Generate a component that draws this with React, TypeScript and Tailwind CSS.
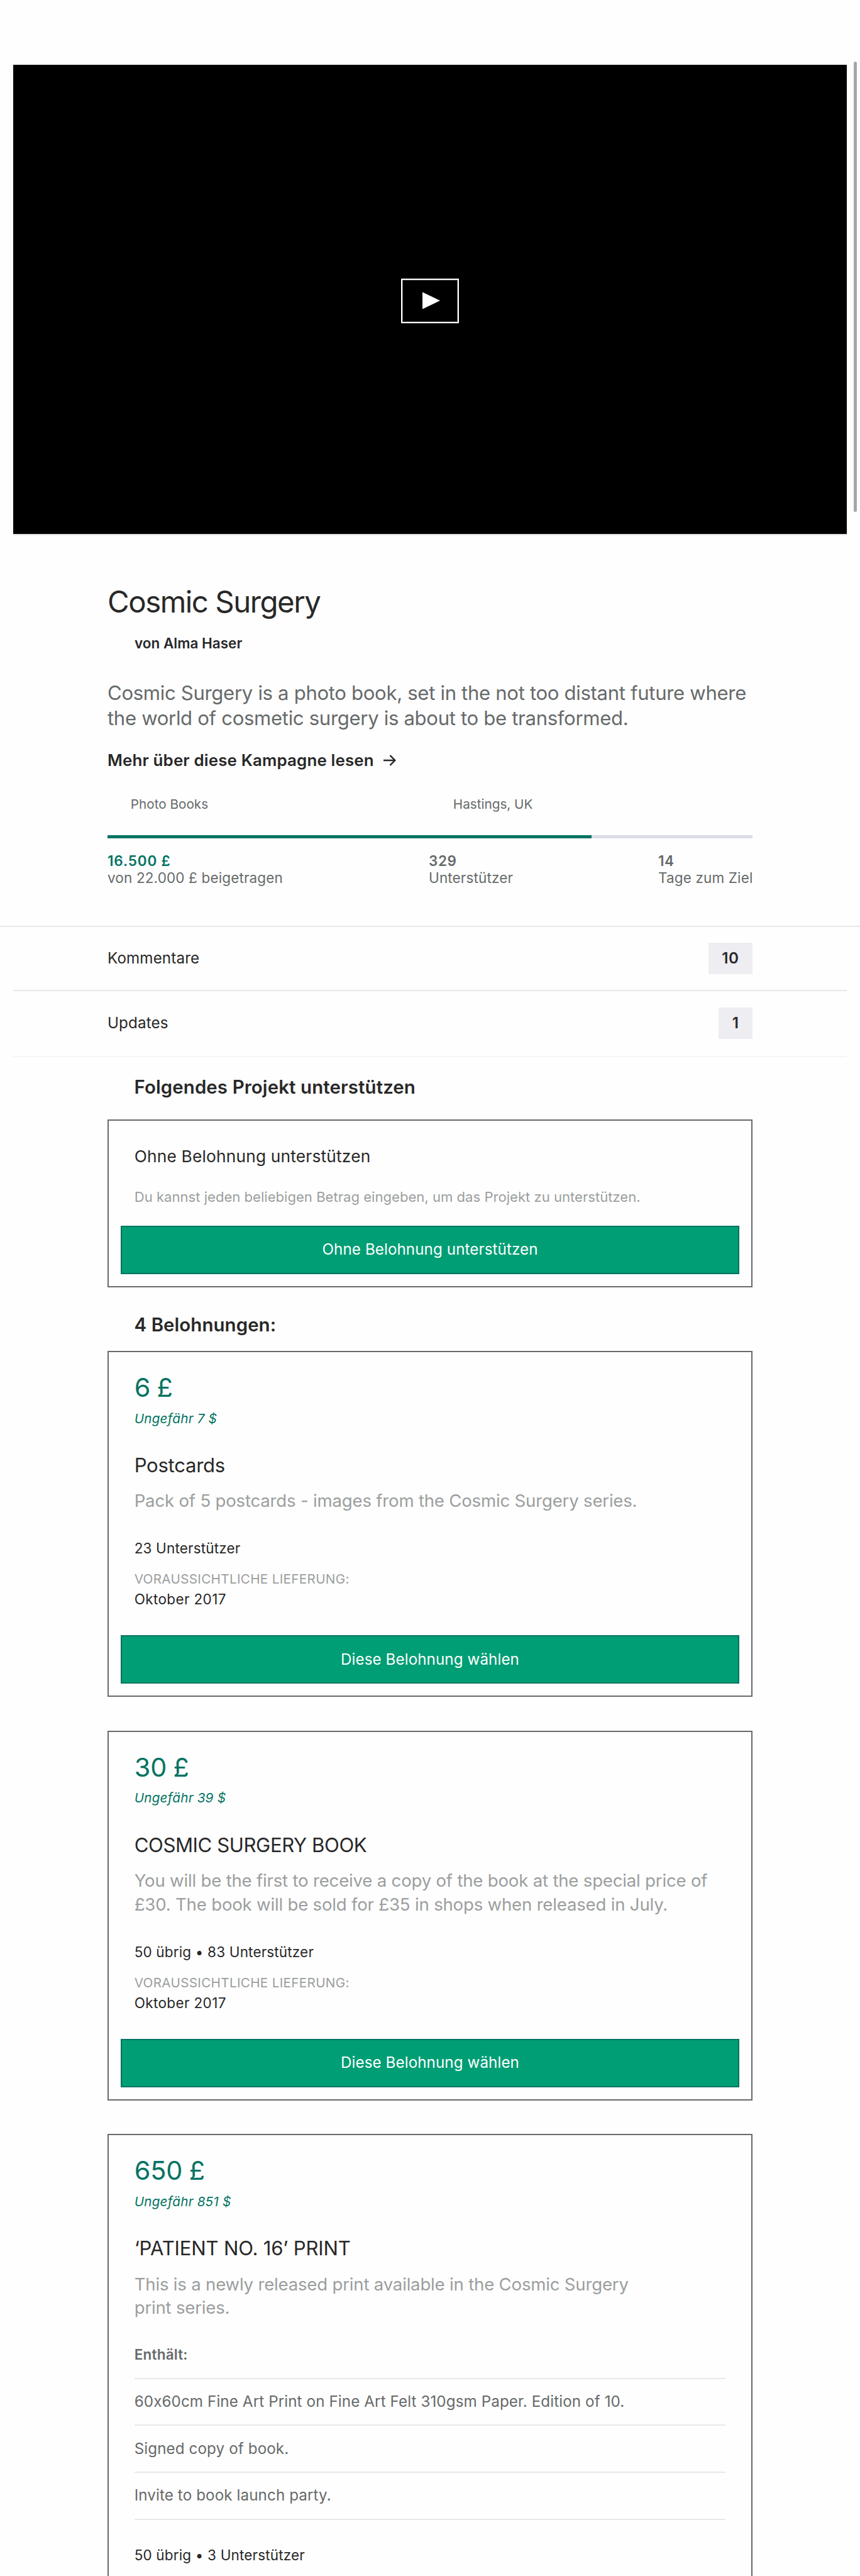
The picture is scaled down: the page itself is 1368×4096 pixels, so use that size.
import type { ReactNode } from "react";

type Reward = {
  price: string;
  approx: string;
  title: string;
  titleTracking: string;
  description: string[];
  includes?: string[];
  backers: string;
  delivery?: string;
};

const rewards: Reward[] = [
  {
    price: "6 £",
    approx: "Ungefähr 7 $",
    title: "Postcards",
    titleTracking: "tracking-[-0.28px]",
    description: ["Pack of 5 postcards - images from the Cosmic Surgery series."],
    backers: "23 Unterstützer",
    delivery: "Oktober 2017",
  },
  {
    price: "30 £",
    approx: "Ungefähr 39 $",
    title: "COSMIC SURGERY BOOK",
    titleTracking: "tracking-[-0.4px]",
    description: [
      "You will be the first to receive a copy of the book at the special price of",
      "£30. The book will be sold for £35 in shops when released in July.",
    ],
    backers: "50 übrig • 83 Unterstützer",
    delivery: "Oktober 2017",
  },
  {
    price: "650 £",
    approx: "Ungefähr 851 $",
    title: "‘PATIENT NO. 16’ PRINT",
    titleTracking: "tracking-[-0.18px]",
    description: [
      "This is a newly released print available in the Cosmic Surgery",
      "print series.",
    ],
    includes: [
      "60x60cm Fine Art Print on Fine Art Felt 310gsm Paper. Edition of 10.",
      "Signed copy of book.",
      "Invite to book launch party.",
    ],
    backers: "50 übrig • 3 Unterstützer",
  },
];

function Video() {
  return (
    <div className="mx-[21px] flex h-[746px] items-center justify-center bg-black pt-[4px] shadow-[0_2px_0_#e0e0e0]">
      <button className="flex h-[71px] w-[92px] items-center justify-center border-2 border-white shadow-[inset_0_0_0_1px_#555]">
        <svg width="28" height="28" viewBox="0 0 28 28" className="ml-[3px]">
          <path d="M0 0.5 L28 14 L0 27.5 Z" fill="#fff" />
        </svg>
      </button>
    </div>
  );
}

function Stat({ value, label, className, green }: { value: string; label: string; className: string; green?: boolean }) {
  return (
    <div className={className}>
      <div
        className={
          green
            ? "font-semibold tracking-[0.85px] text-[#037362]"
            : "font-semibold tracking-[0.6px]"
        }
      >
        {value}
      </div>
      <div className="tracking-[0.14px]">{label}</div>
    </div>
  );
}

function Row({ label, count }: { label: string; count: string }) {
  return (
    <div className="flex flex-1 items-center justify-between pr-[171px] pl-[171px]">
      <span className="text-[24.2px] tracking-[0.12px]">{label}</span>
      <span className="flex h-[50px] items-center bg-[#eeedf2] px-[21.5px] text-[24.2px] font-semibold tracking-[0.5px]">
        {count}
      </span>
    </div>
  );
}

function Action({ children }: { children: ReactNode }) {
  return (
    <button className="mx-[19.4px] flex h-[76.8px] items-center justify-center border-2 border-[#037362] bg-[#009e74] text-[24.2px] tracking-[0.08px] text-white">
      {children}
    </button>
  );
}

function RewardCard({ reward }: { reward: Reward }) {
  const open = !reward.delivery;
  return (
    <article
      className={
        open
          ? "mx-[171px] flex flex-col border-2 border-b-0 border-[#666a6a] pt-[31.7px] pb-[60px]"
          : "mx-[171px] mb-[53.4px] flex flex-col border-2 border-[#666a6a] pt-[31.7px] pb-[19.4px]"
      }
    >
      <div className="flex flex-col px-[40.7px] whitespace-nowrap">
        <div className="text-[41.4px] leading-[48px] tracking-[-0.1px] text-[#037362] [word-spacing:-1.2px]">
          {reward.price}
        </div>
        <div className="mt-[12.9px] text-[20.7px] leading-[26px] tracking-[0.2px] text-[#037362] italic">
          {reward.approx}
        </div>
        <h3 className={`mt-[43.3px] text-[31.1px] leading-[36px] ${reward.titleTracking}`}>{reward.title}</h3>
        <p className="mt-[20.6px] text-[27.6px] leading-[37.6px] tracking-[-0.2px] text-[#9b9e9e]">
          {reward.description.map((line) => (
            <span key={line} className="block">
              {line}
            </span>
          ))}
        </p>
        {reward.includes && (
          <>
            <div className="mt-[41.4px] mb-[22.2px] text-[22.5px] leading-[28px] font-semibold tracking-[0.2px] text-[#666a6a]">
              Enthält:
            </div>
            <ul className="border-b-2 border-[#e8e8e8] text-[24.2px] text-[#666a6a]">
              {reward.includes.map((item) => (
                <li key={item} className="flex h-[74.8px] items-center border-t-2 border-[#e8e8e8] tracking-[0.1px]">
                  {item}
                </li>
              ))}
            </ul>
          </>
        )}
        <div className="mt-[42px] text-[22.5px] leading-[28px] tracking-[0.16px]">{reward.backers}</div>
        {reward.delivery && (
          <>
            <div className="mt-[22px] text-[20.7px] leading-[26px] tracking-[0.3px] text-[#9b9e9e] uppercase">
              Voraussichtliche Lieferung:
            </div>
            <div className="mt-[5px] mb-[43.3px] text-[22.5px] leading-[28px] tracking-[0.37px]">{reward.delivery}</div>
          </>
        )}
      </div>
      {reward.delivery && <Action>Diese Belohnung wählen</Action>}
    </article>
  );
}

export default function App() {
  return (
    <div className="relative h-[4096px] w-[1368px] overflow-hidden bg-[#fefefe] pt-[103px] font-['Inter',sans-serif] text-[#282828] [font-feature-settings:'calt'_0]">
      <div className="absolute top-[98px] right-[5px] h-[716px] w-[5px] rounded-full bg-[#a6a6a6]" />
      <Video />

      <header className="mx-[171px] mt-[79.5px] flex flex-col whitespace-nowrap">
        <h1 className="text-[47.4px] leading-[56px] tracking-[-1.45px]">Cosmic Surgery</h1>
        <div className="mt-[24.7px] ml-[43px] text-[22.5px] leading-[28px] font-semibold">
          von Alma Haser
        </div>
        <p className="mt-[44.5px] text-[31.1px] leading-[40.5px] tracking-[-0.32px] text-[#666a6a]">
          Cosmic Surgery is a photo book, set in the not too distant future where
          <br />
          the world of cosmetic surgery is about to be transformed.
        </p>
        <a className="mt-[30.1px] flex items-center gap-[15.5px] text-[25.9px] leading-[32px] font-semibold tracking-[0.15px]">
          Mehr über diese Kampagne lesen
          <svg width="20" height="18" viewBox="0 0 20 18" fill="none" stroke="#282828" strokeWidth="2.4" className="mt-[1px]">
            <path d="M0 9 H18 M10.5 1.2 L18.3 9 L10.5 16.8" />
          </svg>
        </a>
        <div className="mt-[41.6px] flex pl-[36.8px] text-[20.7px] leading-[26px] text-[#666a6a]">
          <span className="w-[513px]">Photo Books</span>
          <span>Hastings, UK</span>
        </div>
        <div className="mt-[35.5px] h-[5px] bg-[#dbdde8]">
          <div className="h-full w-[75%] bg-[#037362]" />
        </div>
        <div className="mt-[21.8px] flex text-[22.5px] leading-[27px] text-[#666a6a]">
          <Stat className="w-[511px]" value="16.500 £" label="von 22.000 £ beigetragen" green />
          <Stat className="w-[365px]" value="329" label="Unterstützer" />
          <Stat className="w-[150px]" value="14" label="Tage zum Ziel" />
        </div>
      </header>

      <section className="mt-[63.2px]">
        <div className="flex h-[102px] flex-col border-t-2 border-[#e8e8e8]">
          <Row label="Kommentare" count="10" />
        </div>
        <div className="mx-[21px] flex h-[107px] flex-col border-t-2 border-b-2 border-t-[#e8e8e8] border-b-[#f5f5f5]">
          <div className="-mx-[21px] flex flex-1">
            <Row label="Updates" count="1" />
          </div>
        </div>
      </section>

      <h2 className="mt-[29.7px] ml-[213.5px] text-[29.4px] leading-[36px] font-semibold tracking-[0.12px]">
        Folgendes Projekt unterstützen
      </h2>
      <article className="mx-[171px] mt-[33.3px] flex flex-col border-2 border-[#666a6a] pt-[41.3px] pb-[19.4px]">
        <h3 className="px-[40.7px] text-[26.3px] leading-[32px] tracking-[0.19px]">Ohne Belohnung unterstützen</h3>
        <p className="mt-[34px] mb-[32px] px-[40.7px] text-[22.1px] leading-[28px] whitespace-nowrap text-[#9b9e9e]">
          Du kannst jeden beliebigen Betrag eingeben, um das Projekt zu unterstützen.
        </p>
        <Action>Ohne Belohnung unterstützen</Action>
      </article>

      <h2 className="mt-[42px] mb-[22.6px] ml-[213.5px] text-[29.4px] leading-[36px] font-semibold tracking-[0.09px]">
        4 Belohnungen:
      </h2>
      {rewards.map((reward) => (
        <RewardCard key={reward.price} reward={reward} />
      ))}
    </div>
  );
}
